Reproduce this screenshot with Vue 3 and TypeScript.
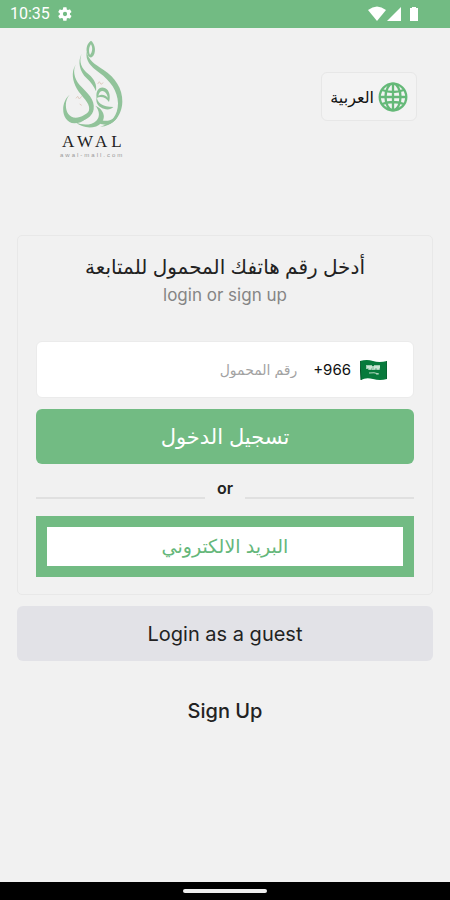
<script setup lang="ts">
import { ref } from 'vue'

const phone = ref<string>('')
</script>

<template>
  <div class="screen">
    <header class="status">
      <div class="status-group">
        <time>10:35</time>
        <svg class="gear" viewBox="0 0 24 24" aria-hidden="true">
          <path fill-rule="evenodd" d="M19.4 13a7.6 7.6 0 0 0 0-2l2.1-1.6a.6.6 0 0 0 .1-.7l-2-3.4a.6.6 0 0 0-.7-.2l-2.5 1a7.400 7.400 0 0 0-1.700-1L14.300 2.400a.6.6 0 0 0-.6-.5h-3.900a.6.6 0 0 0-.5.5L8.900 5.100a7.400 7.400 0 0 0-1.700 1l-2.500-1a.6.6 0 0 0-.7.2L2 8.700a.6.6 0 0 0 .1.700L4.200 11a7.600 7.600 0 0 0 0 2l-2.100 1.600a.6.6 0 0 0-.1.700l2 3.400c.1.2.4.3.7.2l2.500-1a7.400 7.400 0 0 0 1.700 1l.4 2.700c0 .3.2.5.5.5h3.900c.3 0 .5-.2.6-.5l.4-2.700a7.400 7.400 0 0 0 1.700-1l2.500 1c.2.1.5 0 .7-.2l2-3.400a.6.6 0 0 0-.1-.7zM12 15.200a3.200 3.200 0 1 1 0-6.400 3.200 3.200 0 0 1 0 6.400z" />
        </svg>
      </div>
      <svg class="signals" viewBox="0 0 52 16" aria-hidden="true">
        <path d="M0 4Q9-3 18 4L9 15Z" />
        <path d="M33 1V15H19Z" />
        <path d="M44 1h4v1h2v13h-8V2h2z" />
      </svg>
    </header>

    <div class="top">
      <div class="brand">
        <svg class="mark" viewBox="6 10 192 264" aria-hidden="true">
          <g fill="#91c39a">
            <path fill-rule="evenodd" d="M99 12C86 21 82 38 89 54C95 66 103 65 109 51C114 36 109 20 99 12ZM99 23C105 34 103 47 96 55C91 44 93 31 99 23Z" />
            <path d="M86 45C91 70 111 83 136 99C171 121 194 156 193 195C192 239 162 269 127 270C160 261 180 235 180 200C179 162 157 132 124 108C97 88 82 72 86 45Z" />
            <path d="M71 51C61 75 71 96 91 112C111 129 117 145 114 164C108 149 99 137 86 125C65 105 58 74 71 51Z" />
            <path d="M55 82C43 99 48 125 65 145C89 170 111 188 107 218C104 237 88 249 69 253C84 240 96 226 93 210C89 190 64 174 52 147C41 121 42 99 55 82Z" />
            <path d="M35 174C21 188 20 216 31 232C46 253 81 242 102 213C96 239 76 260 49 260C11 258 4 200 35 174Z" />
            <path d="M53 257C74 267 101 266 115 252C128 239 123 218 112 207C137 218 145 241 130 258C112 279 74 276 53 257Z" />
            <path fill-rule="evenodd" d="M116 184C112 162 125 147 142 155C155 161 158 181 153 196C145 183 129 177 116 184ZM121 177C132 172 141 175 149 183C148 165 127 152 121 177Z" />
            <path d="M117 180C116 198 133 210 166 211C158 221 140 220 128 212C117 205 112 191 117 180Z" />
            <path d="M124 246C144 260 170 251 183 225C180 251 153 274 124 260Z" />
          </g>
          <path d="M119 142l5-7 5 8 7-5M54 185l5-6 5 8 7-8M65 202l6 4" fill="none" stroke="#e0cdc2" stroke-width="3" />
        </svg>
        <span class="brand-name">AWAL</span>
        <span class="brand-site">awal-mall.com</span>
      </div>
      <button class="lang" type="button">
        <svg class="globe" viewBox="0 0 30 30" aria-hidden="true">
          <g fill="none" stroke="#65b978" stroke-width="2.300">
            <circle cx="15" cy="15" r="13.300" />
            <ellipse cx="15" cy="15" rx="7.500" ry="13.300" />
            <path d="M15 2v26M2 15h26M4 8q11 4 22 0M4 22q11-4 22 0" />
          </g>
        </svg>
        <span lang="ar">العربية</span>
      </button>
    </div>

    <main class="content">
      <form class="card" @submit.prevent>
        <h1 lang="ar" dir="rtl">أدخل رقم هاتفك المحمول للمتابعة</h1>
        <p class="subtitle">login or sign up</p>
        <div class="phone" dir="rtl">
          <svg class="flag" viewBox="0 0 27 22" aria-hidden="true">
            <path fill="#087a3c" d="M0 2Q7 0 13 2T27 2V20Q20 22 13 20T1 21Z" />
            <path d="M0 2L1 21M27 2V20" stroke="#075329" fill="none" />
            <path d="M7 6v4M9 6v4h2V6M12 10h3V6M17 6v4h2V6M7 8h13" stroke="#d9eddf" stroke-width="1.400" fill="none" />
            <path d="M9 14q5-1 10 1M17 14v2" stroke="#b5d9c1" fill="none" />
          </svg>
          <span class="code" dir="ltr">+966</span>
          <input v-model="phone" type="tel" dir="rtl" lang="ar" placeholder="رقم المحمول" aria-label="رقم المحمول">
        </div>
        <button class="login" type="submit" lang="ar">تسجيل الدخول</button>
        <div class="divider"><span>or</span></div>
        <button class="email" type="button" lang="ar">البريد الالكتروني</button>
      </form>
      <button class="guest" type="button">Login as a guest</button>
      <a class="signup" href="#signup">Sign Up</a>
    </main>
    <footer class="navbar"><span></span></footer>
  </div>
</template>

<style>
body {
  margin: 0;
  background: #f1f1f1;
}
</style>

<style scoped>
.screen {
  box-sizing: border-box;
  min-height: 100vh;
  display: flex;
  flex-direction: column;
  background: #f1f1f1;
  color: #222;
  font-family: Inter, "DejaVu Sans", sans-serif;
}
.screen * {
  box-sizing: border-box;
}
button,
input {
  font-family: inherit;
}
button {
  cursor: pointer;
}
.status {
  height: 28px;
  padding: 0 30px 0 10px;
  display: flex;
  align-items: center;
  justify-content: space-between;
  background: #72bb83;
  color: #fff;
  font: 16px/30px Roboto, sans-serif;
}
.status-group {
  display: flex;
  align-items: center;
  gap: 7px;
}
.status svg {
  fill: #fff;
}
.gear {
  width: 16px;
  height: 16px;
}
.signals {
  width: 52px;
  height: 16px;
}
.top {
  display: flex;
  justify-content: space-between;
  align-items: flex-start;
  height: 130px;
  padding: 12px 33px 0 60px;
}
.brand {
  display: flex;
  flex-direction: column;
  align-items: flex-start;
}
.mark {
  width: 64px;
  height: 88px;
}
.brand-name {
  margin-top: 4px;
  padding-left: 2px;
  font: 17px/20px "Liberation Serif", serif;
  letter-spacing: 4px;
}
.brand-site {
  color: #999;
  font: 6px/6px "Liberation Sans", sans-serif;
  letter-spacing: 2px;
}
.lang {
  display: flex;
  flex-direction: row-reverse;
  align-items: center;
  gap: 4px;
  height: 49px;
  margin-top: 32px;
  padding: 0 8px;
  border: 1px solid #e7e7e7;
  border-radius: 6px;
  background: #f3f3f3;
  color: #111;
  font-size: 16px;
  font-weight: 500;
}
.globe {
  width: 30px;
  height: 30px;
}
.content {
  display: flex;
  flex-direction: column;
  align-items: stretch;
  padding: 77px 17px 0;
}
.card {
  display: flex;
  flex-direction: column;
  padding: 17px 18px;
  border: 1px solid #e8e8e8;
  border-radius: 5px;
}
h1 {
  margin: 0;
  text-align: center;
  font-size: 20px;
  line-height: 28px;
  font-weight: 500;
}
.subtitle {
  margin: 0;
  text-align: center;
  color: #858585;
  font-size: 17px;
  line-height: 28px;
}
.phone {
  display: flex;
  align-items: center;
  height: 57px;
  margin-top: 32px;
  padding: 0 26px;
  border: 1px solid #ebebeb;
  border-radius: 6px;
  background: #fff;
}
.flag {
  flex: none;
  width: 27px;
  height: 22px;
}
.code {
  margin: 0 9px 0 16px;
  color: #111;
  font-size: 15px;
}
.phone input {
  flex: 1;
  min-width: 0;
  padding: 0;
  border: 0;
  outline: 0;
  background: transparent;
  color: #222;
  font-size: 14px;
}
.phone input::placeholder {
  color: #a3a3a3;
  opacity: 1;
}
.login {
  height: 55px;
  margin-top: 11px;
  border: 0;
  border-radius: 6px;
  background: #72bb83;
  color: #fff;
  font-size: 21px;
}
.divider {
  display: flex;
  justify-content: center;
  gap: 12px;
  height: 52px;
  font-size: 16px;
  line-height: 48px;
  font-weight: 600;
}
.divider::before,
.divider::after {
  content: "";
  flex: 1;
  height: 2px;
  margin-top: 33px;
  background: #e0e0e0;
}
.email {
  height: 61px;
  padding: 0;
  border: 11px solid #72bb83;
  background: #fff;
  color: #65b77a;
  font-size: 19px;
}
.guest {
  height: 55px;
  margin-top: 11px;
  border: 0;
  border-radius: 6px;
  background: #e2e2e7;
  color: #222;
  font-size: 20px;
  font-weight: 400;
}
.signup {
  align-self: center;
  margin-top: 36px;
  color: #222;
  font-size: 20px;
  line-height: 28px;
  font-weight: 500;
  text-decoration: none;
}
.navbar {
  display: flex;
  align-items: center;
  justify-content: center;
  height: 18px;
  margin-top: auto;
  background: #000;
}
.navbar span {
  width: 84px;
  height: 4px;
  border-radius: 2px;
  background: #eee;
}
</style>
